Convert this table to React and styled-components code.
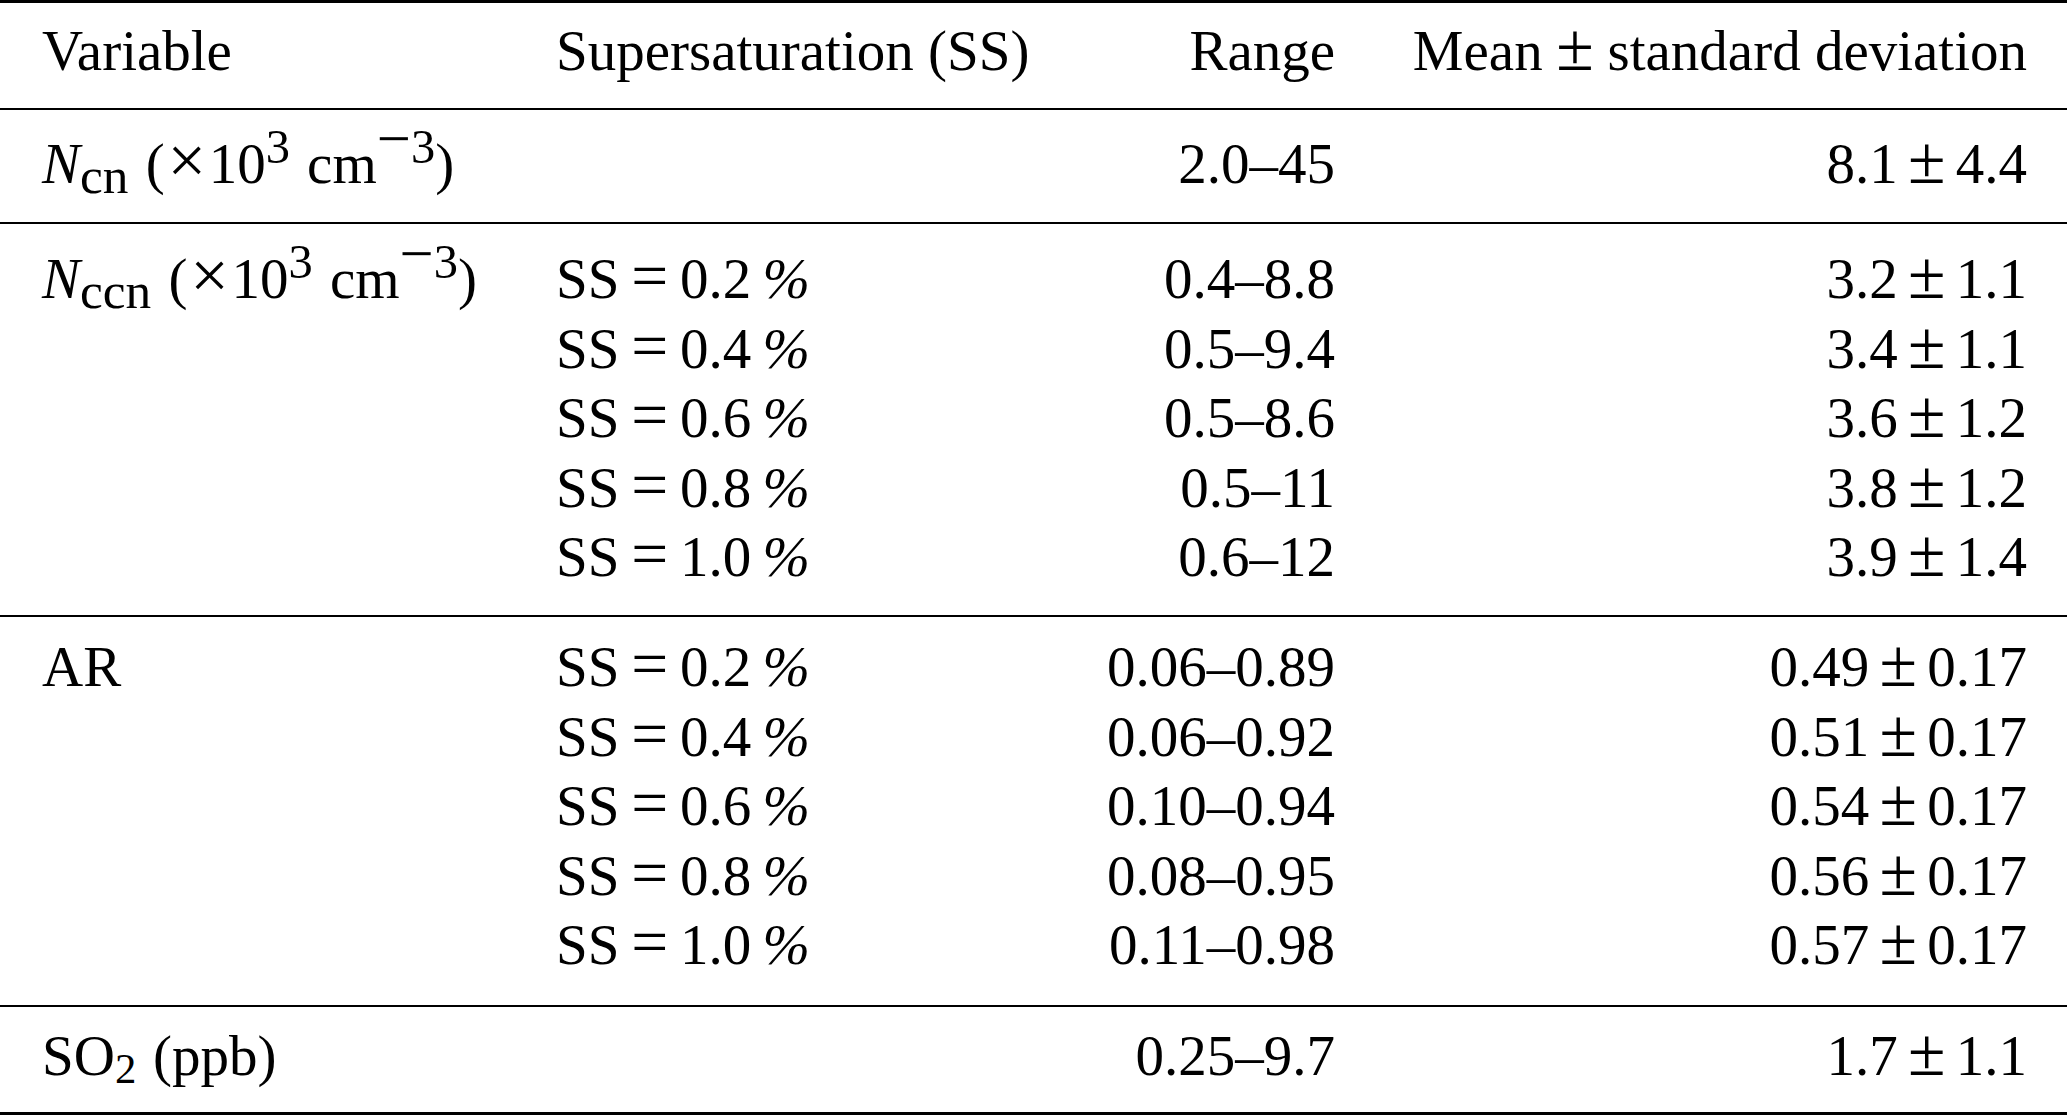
import React from 'react';
import styled, { createGlobalStyle } from 'styled-components';

const GlobalStyle = createGlobalStyle`
  html, body {
    margin: 0;
    padding: 0;
    background: #ffffff;
  }
  body {
    font-family: "Liberation Serif", "Times New Roman", serif;
    color: #000000;
  }
`;

const ccnRows = [
  { ss: '0.2', range: '0.4–8.8', mean: '3.2', sd: '1.1' },
  { ss: '0.4', range: '0.5–9.4', mean: '3.4', sd: '1.1' },
  { ss: '0.6', range: '0.5–8.6', mean: '3.6', sd: '1.2' },
  { ss: '0.8', range: '0.5–11', mean: '3.8', sd: '1.2' },
  { ss: '1.0', range: '0.6–12', mean: '3.9', sd: '1.4' },
];

const arRows = [
  { ss: '0.2', range: '0.06–0.89', mean: '0.49', sd: '0.17' },
  { ss: '0.4', range: '0.06–0.92', mean: '0.51', sd: '0.17' },
  { ss: '0.6', range: '0.10–0.94', mean: '0.54', sd: '0.17' },
  { ss: '0.8', range: '0.08–0.95', mean: '0.56', sd: '0.17' },
  { ss: '1.0', range: '0.11–0.98', mean: '0.57', sd: '0.17' },
];

const MeanSd = ({ mean, sd }) => (
  <>
    {mean}
    <Pm $tight>±</Pm>
    {sd}
  </>
);

const SsValue = ({ value }) => (
  <>
    SS<Rel>=</Rel>
    {value}
    <Pct>%</Pct>
  </>
);

// N with subscript, then the unit (×10^3 cm^-3)
const Concentration = ({ sub }) => (
  <>
    <Var>N</Var>
    <Sub>{sub}</Sub> (<Times>×</Times>10<Sup>3</Sup>
    <Unit>cm</Unit>
    <Sup>
      <Minus>−</Minus>3
    </Sup>
    )
  </>
);

const SubRows = ({ rows }) =>
  rows.map((row) => (
    <React.Fragment key={row.ss}>
      <Cell>
        <SsValue value={row.ss} />
      </Cell>
      <Cell $align="right">{row.range}</Cell>
      <Cell $align="right">
        <MeanSd mean={row.mean} sd={row.sd} />
      </Cell>
    </React.Fragment>
  ));

const App = () => {
  return (
    <>
      <GlobalStyle />
      <Table>
        <Section $top={13} $bottom={22.5}>
          <Cell>Variable</Cell>
          <Cell>Supersaturation (SS)</Cell>
          <Cell $align="right">Range</Cell>
          <Cell $align="right">
            Mean<Pm>±</Pm>standard deviation
          </Cell>
        </Section>

        <Section $top={19} $bottom={23.5}>
          <Cell>
            <Concentration sub="cn" />
          </Cell>
          <Cell />
          <Cell $align="right">2.0–45</Cell>
          <Cell $align="right">
            <MeanSd mean="8.1" sd="4.4" />
          </Cell>
        </Section>

        <Section $top={20} $bottom={23.5}>
          <Label $span={ccnRows.length}>
            <Concentration sub="ccn" />
          </Label>
          <SubRows rows={ccnRows} />
        </Section>

        <Section $top={15} $bottom={25}>
          <Label $span={arRows.length}>AR</Label>
          <SubRows rows={arRows} />
        </Section>

        <Section $top={14} $bottom={22}>
          <Cell>
            SO<Sub $small>2</Sub> (ppb)
          </Cell>
          <Cell />
          <Cell $align="right">0.25–9.7</Cell>
          <Cell $align="right">
            <MeanSd mean="1.7" sd="1.1" />
          </Cell>
        </Section>
      </Table>
    </>
  );
};

export default App;

const Table = styled.div`
  width: 100%;
  border-top: 3px solid #000000;
  border-bottom: 3px solid #000000;
  font-size: 57px;
  line-height: 69.5px;
`;

const Section = styled.div`
  display: grid;
  grid-template-columns: 514px 400px 379px 692px;
  padding: ${(props) => props.$top}px 40px ${(props) => props.$bottom}px 42px;

  & + & {
    border-top: 2px solid #000000;
  }
`;

const Cell = styled.div`
  text-align: ${(props) => props.$align || 'left'};
  white-space: nowrap;
`;

const Label = styled(Cell)`
  grid-row: span ${(props) => props.$span};
`;

const Var = styled.i`
  font-style: italic;
`;

const Sub = styled.span`
  font-size: ${(props) => (props.$small ? '0.75em' : '0.9em')};
  vertical-align: -0.2em;
  line-height: 0;
  margin-right: 0.06em;
`;

const Sup = styled.span`
  font-size: 0.85em;
  vertical-align: 0.42em;
  line-height: 0;
`;

const Minus = styled.span`
  display: inline-block;
  font-size: 1.25em;
  line-height: 0;
  vertical-align: 0.06em;
`;

const Times = styled.span`
  font-size: 1.2em;
  line-height: 0;
  margin: 0 0.04em;
`;

const Unit = styled.span`
  margin-left: 0.3em;
`;

const Rel = styled.span`
  font-size: 1.15em;
  line-height: 0;
  margin: 0 0.18em;
`;

const Pm = styled.span`
  font-size: 1.2em;
  line-height: 0;
  margin: 0 ${(props) => (props.$tight ? '0.15em' : '0.2em')};
`;

const Pct = styled.span`
  margin-left: 0.2em;
  font-style: italic;
`;
